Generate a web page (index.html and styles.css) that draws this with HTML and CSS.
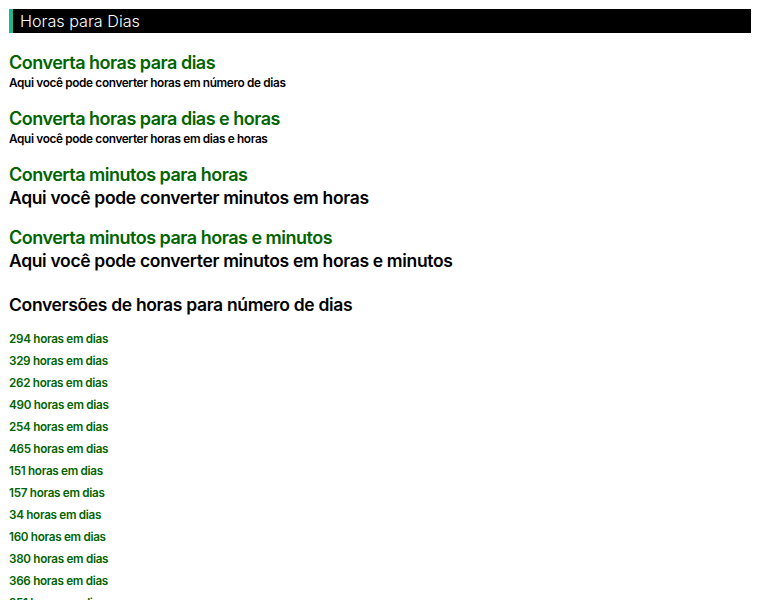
FILE: index.html
```html
<!DOCTYPE html>
<html lang="pt">
<head>
<meta charset="utf-8">
<title>Horas para Dias</title>
<link rel="stylesheet" href="styles.css">
</head>
<body>
<div class="page">
  <h1 class="title-bar">Horas para Dias</h1>
  <section class="block">
    <h2 class="green">Converta horas para dias</h2>
    <p class="sub-small">Aqui você pode converter horas em número de dias</p>
  </section>
  <section class="block">
    <h2 class="green">Converta horas para dias e horas</h2>
    <p class="sub-small">Aqui você pode converter horas em dias e horas</p>
  </section>
  <section class="block">
    <h2 class="green">Converta minutos para horas</h2>
    <p class="sub-big">Aqui você pode converter minutos em horas</p>
  </section>
  <section class="block block-4">
    <h2 class="green">Converta minutos para horas e minutos</h2>
    <p class="sub-big">Aqui você pode converter minutos em horas e minutos</p>
  </section>
  <h2 class="list-title">Conversões de horas para número de dias</h2>
  <ul class="links">
    <li><a href="#">294 horas em dias</a></li>
    <li><a href="#">329 horas em dias</a></li>
    <li><a href="#">262 horas em dias</a></li>
    <li><a href="#">490 horas em dias</a></li>
    <li><a href="#">254 horas em dias</a></li>
    <li><a href="#">465 horas em dias</a></li>
    <li><a href="#">151 horas em dias</a></li>
    <li><a href="#">157 horas em dias</a></li>
    <li><a href="#">34 horas em dias</a></li>
    <li><a href="#">160 horas em dias</a></li>
    <li><a href="#">380 horas em dias</a></li>
    <li><a href="#">366 horas em dias</a></li>
    <li><a href="#">251 horas em dias</a></li>
    <li><a href="#">118 horas em dias</a></li>
  </ul>
</div>
</body>
</html>
```

FILE: styles.css
```css
html, body {
  margin: 0;
  padding: 0;
  background: #ffffff;
}
body {
  font-family: Inter, "Open Sans", "Liberation Sans", sans-serif;
  color: #000;
}
.page {
  padding: 9px;
}
.title-bar {
  margin: 0;
  height: 24px;
  background: #000;
  color: #fff;
  border-left: 4px solid #1fb58f;
  padding-left: 7px;
  font-size: 16.2px;
  font-weight: 300;
  line-height: 24px;
}
.block {
  margin-top: 19px;
}
.block + .block {
  margin-top: 16px;
}
.block-4 {
  margin-top: 17px !important;
}
.green {
  margin: 0;
  color: #006400;
  font-size: 18px;
  font-weight: 600;
  line-height: 22px;
  letter-spacing: -0.5px;
}
.sub-small {
  margin: 0;
  font-size: 11.8px;
  font-weight: 600;
  line-height: 18px;
  letter-spacing: -0.35px;
}
.sub-big {
  margin: 0;
  font-size: 17.5px;
  font-weight: 600;
  line-height: 24px;
  letter-spacing: -0.33px;
}
.list-title {
  margin: 20px 0 0;
  font-size: 17.5px;
  font-weight: 600;
  line-height: 24px;
  letter-spacing: -0.33px;
}
.links {
  list-style: none;
  margin: 11px 0 0;
  padding: 0;
}
.links li {
  line-height: 22px;
  font-size: 11.7px;
}
.links a {
  color: #006400;
  font-weight: 600;
  text-decoration: none;
  letter-spacing: -0.3px;
}
```
